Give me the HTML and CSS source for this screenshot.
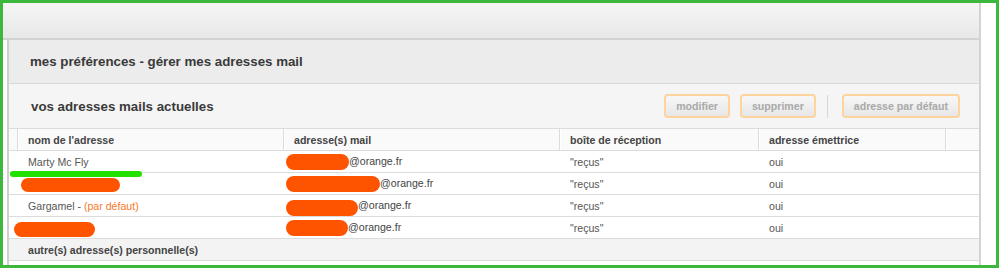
FILE: index.html
```html
<!DOCTYPE html>
<html lang="fr">
<head>
    <meta charset="UTF-8">
    <title>mes préférences - gérer mes adresses mail</title>
    <link rel="stylesheet" href="styles.css">
</head>
<body>

<div class="frame">
    <div class="panel">
        <div class="topbar"></div>

        <div class="content">
            <h1 class="section-title">mes préférences - gérer mes adresses mail</h1>

            <div class="subhead">
                <h2>vos adresses mails actuelles</h2>
                <div class="actions">
                    <button class="btn" disabled>modifier</button>
                    <button class="btn" disabled>supprimer</button>
                    <span class="sep"></span>
                    <button class="btn" disabled>adresse par défaut</button>
                </div>
            </div>

            <table class="addr-table">
                <colgroup>
                    <col class="c-gutter">
                    <col class="c-name">
                    <col class="c-mail">
                    <col class="c-box">
                    <col class="c-sender">
                    <col class="c-filler">
                </colgroup>
                <thead>
                    <tr>
                        <th></th>
                        <th>nom de l'adresse</th>
                        <th>adresse(s) mail</th>
                        <th>boîte de réception</th>
                        <th>adresse émettrice</th>
                        <th></th>
                    </tr>
                </thead>
                <tbody>
                    <tr>
                        <td></td>
                        <td class="name">Marty Mc Fly<span class="underline"></span></td>
                        <td class="mail"><span class="blob w63"></span>@orange.fr</td>
                        <td>"reçus"</td>
                        <td>oui</td>
                        <td></td>
                    </tr>
                    <tr>
                        <td></td>
                        <td class="name"><span class="blob-over b2"></span></td>
                        <td class="mail"><span class="blob w94"></span>@orange.fr</td>
                        <td>"reçus"</td>
                        <td>oui</td>
                        <td></td>
                    </tr>
                    <tr>
                        <td></td>
                        <td class="name">Gargamel - <span class="default">(par défaut)</span></td>
                        <td class="mail"><span class="blob w72 low"></span>@orange.fr</td>
                        <td>"reçus"</td>
                        <td>oui</td>
                        <td></td>
                    </tr>
                    <tr>
                        <td></td>
                        <td class="name"><span class="blob-over b4"></span></td>
                        <td class="mail"><span class="blob w62"></span>@orange.fr</td>
                        <td>"reçus"</td>
                        <td>oui</td>
                        <td></td>
                    </tr>
                    <tr class="group">
                        <td></td>
                        <td colspan="5">autre(s) adresse(s) personnelle(s)</td>
                    </tr>
                </tbody>
            </table>
        </div>
    </div>
</div>

</body>
</html>
```

FILE: styles.css
```css
body {
    margin: 0;
    background: #fff;
    font-family: "Liberation Sans", Arial, sans-serif;
}
.frame {
    width: 999px;
    height: 268px;
    box-sizing: border-box;
    border: 3px solid #3cb83c;
    display: flex;
    overflow: hidden;
}
.panel {
    width: 978px;
    border-right: 2px solid #d3d3d3;
    box-sizing: border-box;
    display: flex;
    flex-direction: column;
}
.topbar {
    height: 35px;
    background: linear-gradient(#f5f5f5, #e8e8e8);
    border-bottom: 2px solid #d2d2d2;
}
.content {
    flex: 1;
    margin-left: 4px;
    border-left: 2px solid #cfcfcf;
}
.section-title {
    margin: 0;
    height: 43px;
    line-height: 43px;
    padding-left: 21px;
    background: #ececec;
    border-bottom: 1px solid #d9d9d9;
    font-size: 13.3px;
    font-weight: bold;
    color: #3a3a3a;
}
.subhead {
    height: 44px;
    display: flex;
    align-items: center;
    justify-content: space-between;
    padding: 0 19px 0 22px;
    background: #f5f5f5;
    border-bottom: 1px solid #dcdcdc;
}
.subhead h2 {
    margin: 0;
    font-size: 13.3px;
    font-weight: bold;
    color: #3a3a3a;
}
.actions {
    display: flex;
    align-items: center;
}
.btn {
    height: 24px;
    padding: 0 10px;
    margin-left: 10px;
    border: 2px solid #fcd49c;
    border-radius: 4px;
    background: linear-gradient(#f7f7f7, #e7e7e7);
    font-family: inherit;
    font-size: 10.6px;
    font-weight: bold;
    color: #a9a9a9;
}
.sep {
    width: 1px;
    height: 23px;
    background: #d6d6d6;
    margin: 0 4px 0 11px;
}
.addr-table {
    width: 970px;
    table-layout: fixed;
    border-collapse: collapse;
    font-size: 10.6px;
    color: #555;
}
.c-gutter { width: 8px; }
.c-name { width: 266px; }
.c-mail { width: 276px; }
.c-box { width: 199px; }
.c-sender { width: 187px; }
.c-filler { width: 34px; }
.addr-table th {
    height: 21px;
    padding: 0 0 0 11px;
    text-align: left;
    font-weight: bold;
    color: #444;
    background: #fafafa;
    border-bottom: 1px solid #dcdcdc;
    box-shadow: inset 1px 0 #dcdcdc, inset 2px 0 #fff;
}
.addr-table th:first-child {
    box-shadow: none;
}
.addr-table td {
    height: 21px;
    padding: 0 0 0 11px;
    border-bottom: 1px solid #dcdcdc;
    white-space: nowrap;
}
.addr-table td:first-child {
    padding: 0;
}
.addr-table td.name {
    position: relative;
}
.addr-table td.mail {
    padding-left: 3px;
    color: #444;
}
.default {
    color: #f7782a;
}
.blob {
    display: inline-block;
    height: 16px;
    border-radius: 8px;
    background: #fe5400;
    vertical-align: middle;
}
.blob.low { position: relative; top: 2px; }
.w62 { width: 62px; }
.w63 { width: 63px; }
.w72 { width: 72px; }
.w94 { width: 94px; }
.blob-over {
    position: absolute;
    top: 5px;
    height: 15px;
    border-radius: 8px;
    background: #fe5400;
}
.b2 { left: 4px; width: 99px; height: 14px; }
.b4 { left: -3px; width: 81px; }
.underline {
    position: absolute;
    left: -7px;
    top: 20px;
    width: 132px;
    height: 6px;
    border-radius: 3px;
    background: #22e000;
    z-index: 2;
}
.addr-table tr.group td {
    background: #f3f3f3;
    font-weight: bold;
    color: #444;
}
```
